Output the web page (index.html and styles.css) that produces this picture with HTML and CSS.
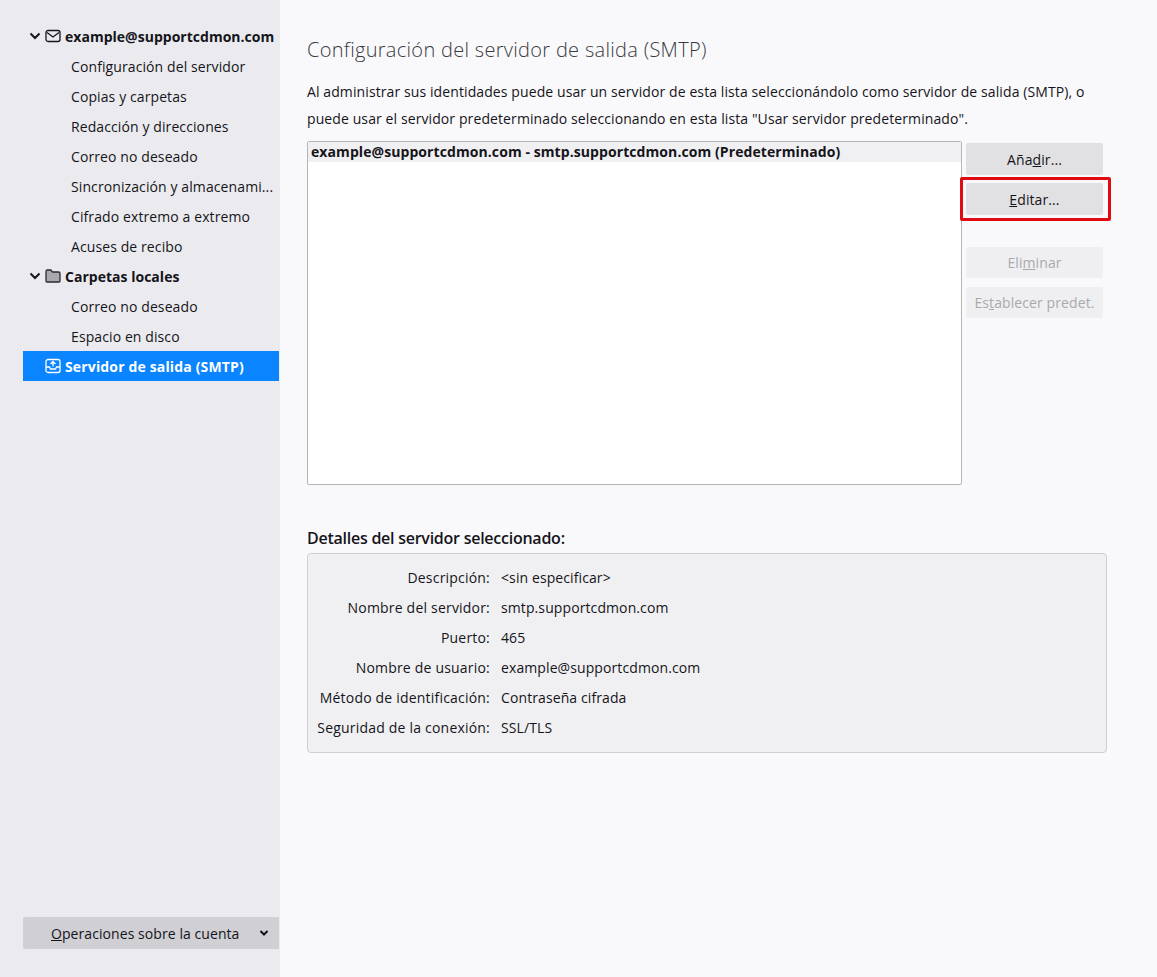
FILE: index.html
```html
<!DOCTYPE html>
<html lang="es">
<head>
<meta charset="utf-8">
<title>Configuración del servidor de salida (SMTP)</title>
<link rel="stylesheet" href="styles.css">
</head>
<body>
<div class="app">
  <aside class="sidebar">
    <ul class="tree">
      <li class="row account">
        <svg class="chev" viewBox="0 0 12 12"><path d="M1.500 3.500 6 8l4.500-4.500"/></svg>
        <svg class="ico" viewBox="0 0 16 16"><rect x="1" y="2.500" width="14" height="11" rx="2"/><path d="M2 4.500 8 9l6-4.500"/></svg>
        <span>example@supportcdmon.com</span>
      </li>
      <li class="row sub">Configuración del servidor</li>
      <li class="row sub">Copias y carpetas</li>
      <li class="row sub">Redacción y direcciones</li>
      <li class="row sub">Correo no deseado</li>
      <li class="row sub">Sincronización y almacenami...</li>
      <li class="row sub">Cifrado extremo a extremo</li>
      <li class="row sub">Acuses de recibo</li>
      <li class="row account">
        <svg class="chev" viewBox="0 0 12 12"><path d="M1.500 3.500 6 8l4.500-4.500"/></svg>
        <svg class="ico ico-fill" viewBox="0 0 16 16"><path d="M1 13V3.500A1.500 1.500 0 0 1 2.500 2h3.300l1.700 2h6A1.500 1.500 0 0 1 15 5.500V13a1 1 0 0 1-1 1H2a1 1 0 0 1-1-1z"/></svg>
        <span>Carpetas locales</span>
      </li>
      <li class="row sub">Correo no deseado</li>
      <li class="row sub">Espacio en disco</li>
      <li class="row account selected">
        <svg class="ico ico-out" viewBox="0 0 16 16"><rect x="1" y="1.500" width="14" height="13" rx="2"/><path d="M1 9h3.500l1 2h5l1-2H15M8 8.500V3.500M5.500 6 8 3.500 10.500 6"/></svg>
        <span>Servidor de salida (SMTP)</span>
      </li>
    </ul>
    <button class="ops"><span class="ops-label"><u>O</u>peraciones sobre la cuenta</span><svg class="chev chev-small" viewBox="0 0 12 12"><path d="M2.500 4 6 7.500 9.500 4"/></svg></button>
  </aside>
  <main class="content">
    <h1 class="title">Configuración del servidor de salida (SMTP)</h1>
    <p class="intro">Al administrar sus identidades puede usar un servidor de esta lista seleccionándolo como servidor de salida (SMTP), o puede usar el servidor predeterminado seleccionando en esta lista "Usar servidor predeterminado".</p>
    <section class="servers">
      <div class="listbox">
        <div class="list-item">example@supportcdmon.com - smtp.supportcdmon.com (Predeterminado)</div>
      </div>
      <div class="actions">
        <button class="btn">Aña<u>d</u>ir...</button>
        <button class="btn highlighted"><u>E</u>ditar...</button>
        <button class="btn disabled spaced" disabled>Eli<u>m</u>inar</button>
        <button class="btn disabled last" disabled>Es<u>t</u>ablecer predet.</button>
      </div>
    </section>
    <h2 class="details-title">Detalles del servidor seleccionado:</h2>
    <dl class="details">
      <dt>Descripción:</dt><dd>&lt;sin especificar&gt;</dd>
      <dt>Nombre del servidor:</dt><dd>smtp.supportcdmon.com</dd>
      <dt>Puerto:</dt><dd>465</dd>
      <dt>Nombre de usuario:</dt><dd>example@supportcdmon.com</dd>
      <dt>Método de identificación:</dt><dd>Contraseña cifrada</dd>
      <dt>Seguridad de la conexión:</dt><dd>SSL/TLS</dd>
    </dl>
  </main>
</div>
</body>
</html>
```
FILE: styles.css
```css
* { box-sizing: border-box; }
html, body { margin: 0; height: 100%; }
body {
  font-family: "Open Sans", "Noto Sans", "Liberation Sans", sans-serif;
  font-size: 14px;
  letter-spacing: 0.1px;
  color: #15141a;
  background: #f9f9fb;
}
.app { display: flex; height: 977px; overflow: hidden; }
.sidebar {
  width: 280px;
  flex: none;
  background: #ebebef;
  padding: 21px 1px 28px 23px;
  display: flex;
  flex-direction: column;
  justify-content: space-between;
}
.tree { list-style: none; margin: 0; padding: 0; }
.row { height: 30px; display: flex; align-items: center; white-space: nowrap; }
.sub { padding-left: 48px; }
.account { font-weight: 700; padding-left: 6px; letter-spacing: 0.02px; }
.selected { background: #0a84ff; color: #fff; padding-left: 22px; letter-spacing: 0.15px; }
.chev { width: 12px; height: 12px; flex: none; fill: none; stroke: #15141a; stroke-width: 2; margin-right: 4px; }
.ico { width: 16px; height: 16px; flex: none; fill: none; stroke: #15141a; stroke-width: 1.300; margin-right: 4px; }
.ico-fill { fill: #a9a9ad; stroke: #2b2a30; }
.ico-out { stroke: #fff; }
.ops {
  height: 32px;
  border: 0;
  border-radius: 2px 0 0 2px;
  background: #cfcfd4;
  font: inherit;
  letter-spacing: 0.07px;
  color: inherit;
  display: flex;
  align-items: center;
  padding: 0 9px 0 28px;
  justify-content: space-between;
}
.chev-small { margin: 0; stroke-width: 2; }
.content { flex: 1; padding: 34px 0 0 27px; min-width: 0; }
.title { margin: 0; font-size: 20px; font-weight: 300; line-height: 32px; color: #3a3940; letter-spacing: 0.3px; }
.intro { margin: 12px 0 0; width: 790px; line-height: 27px; }
.servers { display: flex; margin-top: 9px; }
.listbox { width: 655px; height: 344px; background: #fff; border: 1px solid #b5b5b8; border-radius: 2px; padding: 0; }
.list-item { height: 20px; line-height: 20px; padding-left: 3px; background: #f0f0f2; font-weight: 700; white-space: nowrap; letter-spacing: 0.08px; }
.actions { display: flex; flex-direction: column; margin: 2px 0 0 4px; gap: 8px; width: 137px; }
.btn { height: 32px; border: 0; border-radius: 2px; background: #e1e1e3; font: inherit; letter-spacing: inherit; color: #15141a; padding: 0; position: relative; }
.highlighted::after { content: ""; position: absolute; inset: -6px -8px -6px -6px; border: 3px solid #e00b12; border-radius: 2px; }
.disabled { background: #efeff1; color: #a9a9ad; height: 31px; }
.spaced { margin-top: 24px; }
.last { margin-top: 1px; }
.details-title { margin: 41px 0 0; font-size: 16px; font-weight: 600; line-height: 24px; letter-spacing: -0.25px; }
.details {
  margin: 3px 0 0;
  width: 800px;
  height: 200px;
  background: #f0f0f2;
  border: 1px solid #cfcfd4;
  border-radius: 4px;
  padding: 8px 0;
  display: grid;
  grid-template-columns: 182px 1fr;
  grid-auto-rows: 30px;
  column-gap: 11px;
  align-items: center;
}
.details dt { text-align: right; letter-spacing: 0.2px; }
.details dd { margin: 0; }
```
